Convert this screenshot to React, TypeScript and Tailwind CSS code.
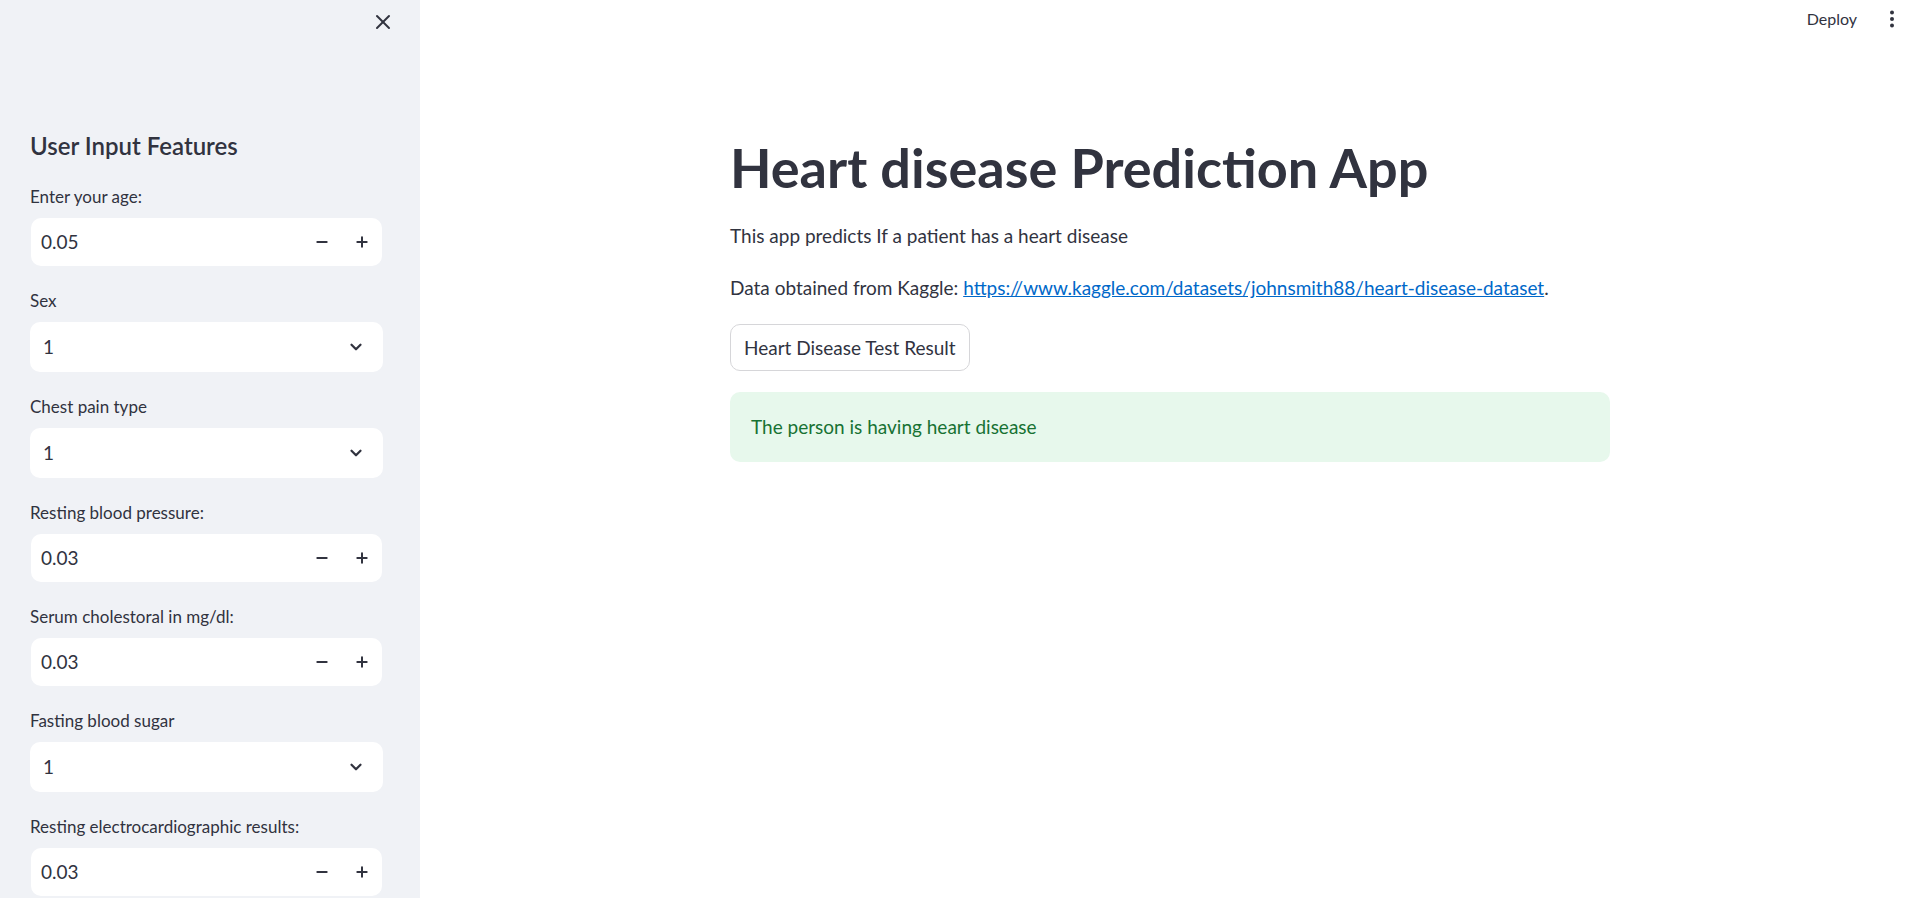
import { X, Minus, Plus, ChevronDown } from "lucide-react";

type FieldKind = 'number' | 'select'

interface SidebarField {
    label: string;
    kind: FieldKind;
    value: string;
}

const fields: SidebarField[] = [
    { label: 'Enter your age:', kind: 'number', value: '0.05' },
    { label: 'Sex', kind: 'select', value: '1' },
    { label: 'Chest pain type', kind: 'select', value: '1' },
    { label: 'Resting blood pressure:', kind: 'number', value: '0.03' },
    { label: 'Serum cholestoral in mg/dl:', kind: 'number', value: '0.03' },
    { label: 'Fasting blood sugar', kind: 'select', value: '1' },
    { label: 'Resting electrocardiographic results:', kind: 'number', value: '0.03' },
]

const NumberBox = ({ value }: { value: string }) => (
    <div className="mx-px flex h-[48px] items-center rounded-[10px] bg-white pl-[10px]">
        <span className="flex-1 text-[19px] text-[#31333F]">{value}</span>
        <button className="flex h-[48px] w-[40px] items-center justify-center text-[#31333F]">
            <Minus size={16} strokeWidth={3} />
        </button>
        <button className="flex h-[48px] w-[40px] items-center justify-center text-[#31333F]">
            <Plus size={16} strokeWidth={3} />
        </button>
    </div>
)

const SelectBox = ({ value }: { value: string }) => (
    <div className="flex h-[50px] items-center rounded-[10px] bg-white pl-[13px] pr-[18px]">
        <span className="flex-1 text-[19px] text-[#31333F]">{value}</span>
        <ChevronDown size={18} strokeWidth={3} className="text-[#31333F]" />
    </div>
)

const FieldGroup = ({ field }: { field: SidebarField }) => (
    <div className="flex flex-col">
        <label className="mb-[8px] text-[17px] leading-[26px] text-[#31333F]">{field.label}</label>
        {
            field.kind === 'number'
                ? <NumberBox value={field.value} />
                : <SelectBox value={field.value} />
        }
    </div>
)

const Sidebar = () => (
    <aside className="flex h-screen w-[420px] shrink-0 flex-col overflow-hidden bg-[#f0f2f6] pl-[30px] pr-[37px]">
        <div className="flex justify-end pt-[10px]">
            <X size={24} strokeWidth={2} className="mr-[-12px] text-[#31333F]" />
        </div>
        <h2 className="mt-[97px] text-[24px] font-semibold leading-[30px] text-[#31333F]">User Input Features</h2>
        <div className="mt-[23px] flex flex-col gap-[22px]">
            {fields.map((field, index) => (
                <FieldGroup key={index} field={field} />
            ))}
        </div>
    </aside>
)

const Header = () => (
    <div className="flex h-[38px] items-center justify-end pr-[11px]">
        <span className="text-[16px] leading-[24px] text-[#31333F]">Deploy</span>
        <svg width="16" height="20" viewBox="0 0 16 20" className="ml-[27px]" fill="#31333F">
            <circle cx="8" cy="3.5" r="2" />
            <circle cx="8" cy="10" r="2" />
            <circle cx="8" cy="16.5" r="2" />
        </svg>
    </div>
)

export default function App() {
    return (
        <div className="flex h-screen w-full overflow-hidden bg-white font-['Lato','Liberation_Sans',sans-serif]">
            <Sidebar />
            <main className="flex flex-1 flex-col pl-[9px]">
                <Header />
                <div className="mx-auto flex w-[880px] flex-col pt-[99px]">
                    <h1 className="text-[54px] font-bold leading-[62px] text-[#31333F]">Heart disease Prediction App</h1>
                    <p className="mt-[23px] text-[19px] leading-[28px] text-[#31333F]">
                        This app predicts If a patient has a heart disease
                    </p>
                    <p className="mt-[24px] text-[19px] leading-[28px] text-[#31333F]">
                        Data obtained from Kaggle:{' '}
                        <a href="#" className="text-[#0068c9] underline">https://www.kaggle.com/datasets/johnsmith88/heart-disease-dataset</a>.
                    </p>
                    <div className="mt-[22px]">
                        <button className="h-[47px] rounded-[10px] border border-[#d6d6d9] bg-white px-[13px] text-[19px] leading-[28px] text-[#31333F]">
                            Heart Disease Test Result
                        </button>
                    </div>
                    <div className="mt-[21px] rounded-[10px] bg-[#e7f8ec] px-[21px] py-[21px] text-[19px] leading-[28px] text-[#177233]">
                        The person is having heart disease
                    </div>
                </div>
            </main>
        </div>
    )
}
